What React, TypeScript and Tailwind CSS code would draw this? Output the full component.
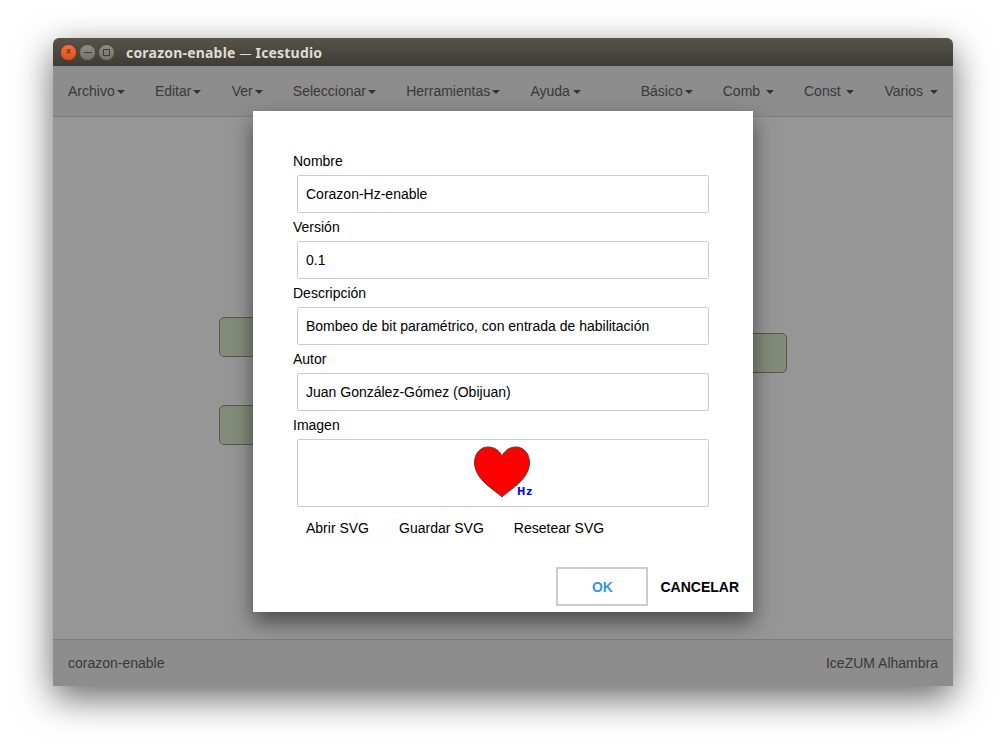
import React from "react"

const menusLeft = ["Archivo", "Editar", "Ver", "Seleccionar", "Herramientas", "Ayuda"]
const menusRight = ["Básico", "Comb ", "Const ", "Varios "]

const fields = [
    { label: "Nombre", value: "Corazon-Hz-enable" },
    { label: "Versión", value: "0.1" },
    { label: "Descripción", value: "Bombeo de bit paramétrico, con entrada de habilitación" },
    { label: "Autor", value: "Juan González-Gómez (Obijuan)" },
]

const Menu = ({ label }: { label: string }) => (
    <span className="text-[14px] leading-5 text-[#616161] whitespace-pre [&:last-child>span]:ml-[3px]">
        {label}
        <span className="inline-block ml-[2px] align-middle w-0 h-0 border-x-4 border-x-transparent border-t-4 border-t-[#555]" />
    </span>
)

const Node = ({ className }: { className: string }) => (
    <div className={`absolute w-[100px] h-[40px] rounded-[5px] border border-[#8a9680] bg-[#dae8ca] ${className}`} />
)

const Heart = () => (
    <svg width="60" height="54" viewBox="0 0 60 54" className="block">
        <path
            d="M28 51 C21 44 1 34 0.500 17 C0.300 7 7 1 14 1 C20 1 25 4 28 10 C31 4 36 1 42 1 C49 1 55.700 7 55.500 17 C55 34 35 44 28 51 Z"
            fill="#ff0000"
            stroke="#5a3a3a"
            strokeWidth="1"
        />
        <text x="43" y="49" fontFamily="'DejaVu Sans', sans-serif" fontWeight="700" fontSize="10" letterSpacing="0.800" fill="#0000ff">
            Hz
        </text>
    </svg>
)

export default function App() {
    return (
        <div className="w-[999px] h-[756px] bg-white pt-[38px] pl-[53px] overflow-hidden font-['Liberation_Sans',sans-serif]">
            <div className="relative w-[900px] h-[648px] flex flex-col rounded-t-[6px] bg-white shadow-[0_12px_36px_rgba(0,0,0,0.6)]">
                {/* titlebar */}
                <div className="h-[28px] shrink-0 flex items-center rounded-t-[6px] bg-gradient-to-b from-[#57534b] to-[#3e3c37] pl-[7px]">
                    <span className="w-[17px] h-[17px] rounded-full bg-gradient-to-b from-[#f0743c] to-[#dd4f1f] border border-[#7c3a20] flex items-center justify-center text-[10px] leading-none text-[#5a1d08]">×</span>
                    <span className="ml-[2px] w-[17px] h-[17px] rounded-full bg-gradient-to-b from-[#8f8c84] to-[#75726a] border border-[#4a4843] flex items-center justify-center">
                        <span className="w-[8px] h-px bg-[#3e3c37]" />
                    </span>
                    <span className="ml-[2px] w-[17px] h-[17px] rounded-full bg-gradient-to-b from-[#8f8c84] to-[#75726a] border border-[#4a4843] flex items-center justify-center">
                        <span className="w-[7px] h-[7px] border border-[#3e3c37]" />
                    </span>
                    <span className="ml-[11px] text-[14px] font-bold text-[#dfdbd2] tracking-[0.2px] font-['Noto_Sans',sans-serif]">
                        corazon-enable <span className="text-[12px] font-normal">—</span> Icestudio
                    </span>
                </div>

                {/* navbar */}
                <div className="h-[51px] shrink-0 flex items-center justify-between px-[15px] bg-[#ebebeb] border-b border-[#d0d0d0]">
                    <div className="flex gap-[30.2px]">
                        {menusLeft.map((m) => (
                            <Menu key={m} label={m} />
                        ))}
                    </div>
                    <div className="flex gap-[30px]">
                        {menusRight.map((m) => (
                            <Menu key={m} label={m} />
                        ))}
                    </div>
                </div>

                {/* canvas */}
                <div className="relative flex-1 bg-[#fafafa]">
                    <Node className="left-[166px] top-[200px]" />
                    <Node className="left-[166px] top-[288px]" />
                    <Node className="left-[634px] top-[216px]" />
                </div>

                {/* footer */}
                <div className="h-[47px] shrink-0 flex items-center justify-between px-[15px] bg-[#ebebeb] border-t border-[#d0d0d0] text-[14px] text-[#616161]">
                    <span>corazon-enable</span>
                    <span>IceZUM Alhambra</span>
                </div>

                {/* overlay */}
                <div className="absolute left-0 right-0 top-[28px] bottom-0 bg-black/40" />

                {/* dialog */}
                <div className="absolute left-[200px] top-[73px] w-[500px] h-[501px] bg-white shadow-[0_10px_20px_rgba(0,0,0,0.5)] pt-[36px] pl-[40px] pr-[44px] text-[14px] text-black">
                    {fields.map((f) => (
                        <div key={f.label}>
                            <div className="h-[28px] leading-[28px]">{f.label}</div>
                            <div className="ml-[4px] h-[38px] px-[8px] flex items-center border border-[#ccc] rounded-[2px]">
                                {f.value}
                            </div>
                        </div>
                    ))}
                    <div className="h-[28px] leading-[28px]">Imagen</div>
                    <div className="ml-[4px] h-[68px] flex items-center justify-center border border-[#ccc] rounded-[2px] pl-[2px]">
                        <Heart />
                    </div>
                    <div className="ml-[13px] mt-[11px] flex gap-[30px]">
                        <span>Abrir SVG</span>
                        <span>Guardar SVG</span>
                        <span>Resetear SVG</span>
                    </div>
                    <div className="absolute right-[14px] bottom-[6px] flex items-center gap-[12px] font-bold">
                        <div className="w-[92px] h-[39px] pt-[1px] flex items-center justify-center border-[2px] border-[#ccc] text-[#3498db]">
                            OK
                        </div>
                        <span className="pt-[1px]">CANCELAR</span>
                    </div>
                </div>
            </div>
        </div>
    )
}
